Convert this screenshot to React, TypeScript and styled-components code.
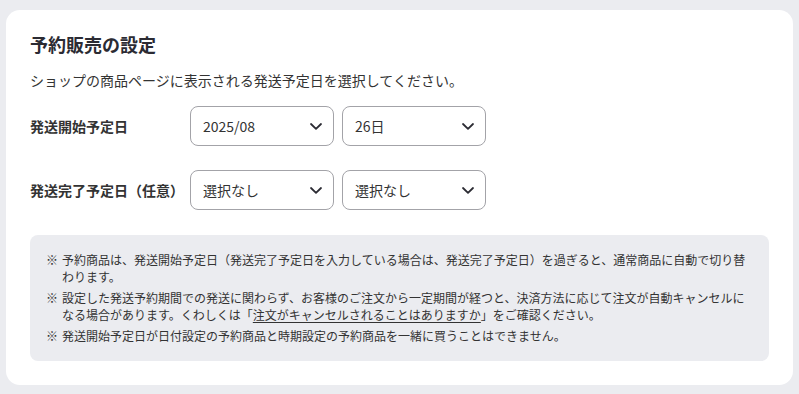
import React, { useState } from "react";
import styled, { createGlobalStyle } from "styled-components";

const GlobalStyle = createGlobalStyle`
  body {
    margin: 0;
    background: #ebecf0;
    font-family: "Noto Sans CJK JP", "Noto Sans", sans-serif;
    color: #333333;
  }
`;

const Page = styled.div`
  padding: 10px 6px 11px 6px;
`;

const Card = styled.section`
  background: #ffffff;
  border-radius: 14px;
  padding: 22px 24px 24px 24px;
`;

const Title = styled.h2`
  margin: 0;
  font-size: 18px;
  line-height: 24px;
  font-weight: 700;
  color: #2b2b33;
`;

const Lead = styled.p`
  margin: 14px 0 16px 0;
  font-size: 14px;
  line-height: 20px;
`;

const Row = styled.div<{ $gap?: number }>`
  display: flex;
  align-items: center;
  margin-bottom: ${(p) => p.$gap ?? 24}px;
`;

const Label = styled.div`
  width: 160px;
  font-size: 14px;
  font-weight: 700;
`;

const Selects = styled.div`
  display: flex;
  gap: 8px;
`;

const SelectWrap = styled.div`
  position: relative;
  width: 144px;
  height: 40px;
`;

const NativeSelect = styled.select`
  appearance: none;
  width: 100%;
  height: 100%;
  box-sizing: border-box;
  border: 1px solid #a3a3a8;
  border-radius: 8px;
  background: #ffffff;
  padding: 0 36px 0 12px;
  font-family: inherit;
  font-size: 14px;
  color: #333333;
`;

const Chevron = styled.svg`
  position: absolute;
  right: 12px;
  top: 17px;
  pointer-events: none;
`;

const NoteBox = styled.div`
  background: #ebecf0;
  border-radius: 8px;
  padding: 16px 16px 17px 16px;
`;

const NoteList = styled.ul`
  list-style: none;
  margin: 0;
  padding: 0;
  display: flex;
  flex-direction: column;
  gap: 4px;
`;

const NoteItem = styled.li`
  display: flex;
  font-size: 12px;
  line-height: 17px;
  color: #333333;
`;

const Mark = styled.span`
  flex: 0 0 16px;
`;

const Link = styled.a`
  color: inherit;
  text-decoration: underline;
  text-underline-offset: 2px;
`;

type SelectProps = {
  value: string;
  options: string[];
  onChange: (v: string) => void;
};

const Select: React.FC<SelectProps> = ({ value, options, onChange }) => (
  <SelectWrap>
    <NativeSelect value={value} onChange={(e) => onChange(e.target.value)}>
      {options.map((o) => (
        <option key={o} value={o}>
          {o}
        </option>
      ))}
    </NativeSelect>
    <Chevron width="12" height="7" viewBox="0 0 12 7" fill="none">
      <path d="M1 1L6 5.8L11 1" stroke="#2b2b33" strokeWidth="1.8" strokeLinecap="round" strokeLinejoin="round" />
    </Chevron>
  </SelectWrap>
);

const months = ["2025/08", "2025/09", "2025/10"];
const days = Array.from({ length: 31 }, (_, i) => `${i + 1}日`);

const App: React.FC = () => {
  const [startMonth, setStartMonth] = useState("2025/08");
  const [startDay, setStartDay] = useState("26日");
  const [endMonth, setEndMonth] = useState("選択なし");
  const [endDay, setEndDay] = useState("選択なし");

  return (
    <>
      <GlobalStyle />
      <Page>
        <Card>
          <Title>予約販売の設定</Title>
          <Lead>ショップの商品ページに表示される発送予定日を選択してください。</Lead>
          <Row>
            <Label>発送開始予定日</Label>
            <Selects>
              <Select value={startMonth} options={months} onChange={setStartMonth} />
              <Select value={startDay} options={days} onChange={setStartDay} />
            </Selects>
          </Row>
          <Row $gap={25}>
            <Label>発送完了予定日（任意）</Label>
            <Selects>
              <Select value={endMonth} options={["選択なし", ...months]} onChange={setEndMonth} />
              <Select value={endDay} options={["選択なし", ...days]} onChange={setEndDay} />
            </Selects>
          </Row>
          <NoteBox>
            <NoteList>
              <NoteItem>
                <Mark>※</Mark>
                <span>
                  予約商品は、発送開始予定日（発送完了予定日を入力している場合は、発送完了予定日）を過ぎると、通常商品に自動で切り替わります。
                </span>
              </NoteItem>
              <NoteItem>
                <Mark>※</Mark>
                <span>
                  設定した発送予約期間での発送に関わらず、お客様のご注文から一定期間が経つと、決済方法に応じて注文が自動キャンセルになる場合があります。くわしくは「
                  <Link href="#">注文がキャンセルされることはありますか</Link>」をご確認ください。
                </span>
              </NoteItem>
              <NoteItem>
                <Mark>※</Mark>
                <span>発送開始予定日が日付設定の予約商品と時期設定の予約商品を一緒に買うことはできません。</span>
              </NoteItem>
            </NoteList>
          </NoteBox>
        </Card>
      </Page>
    </>
  );
};

export default App;
